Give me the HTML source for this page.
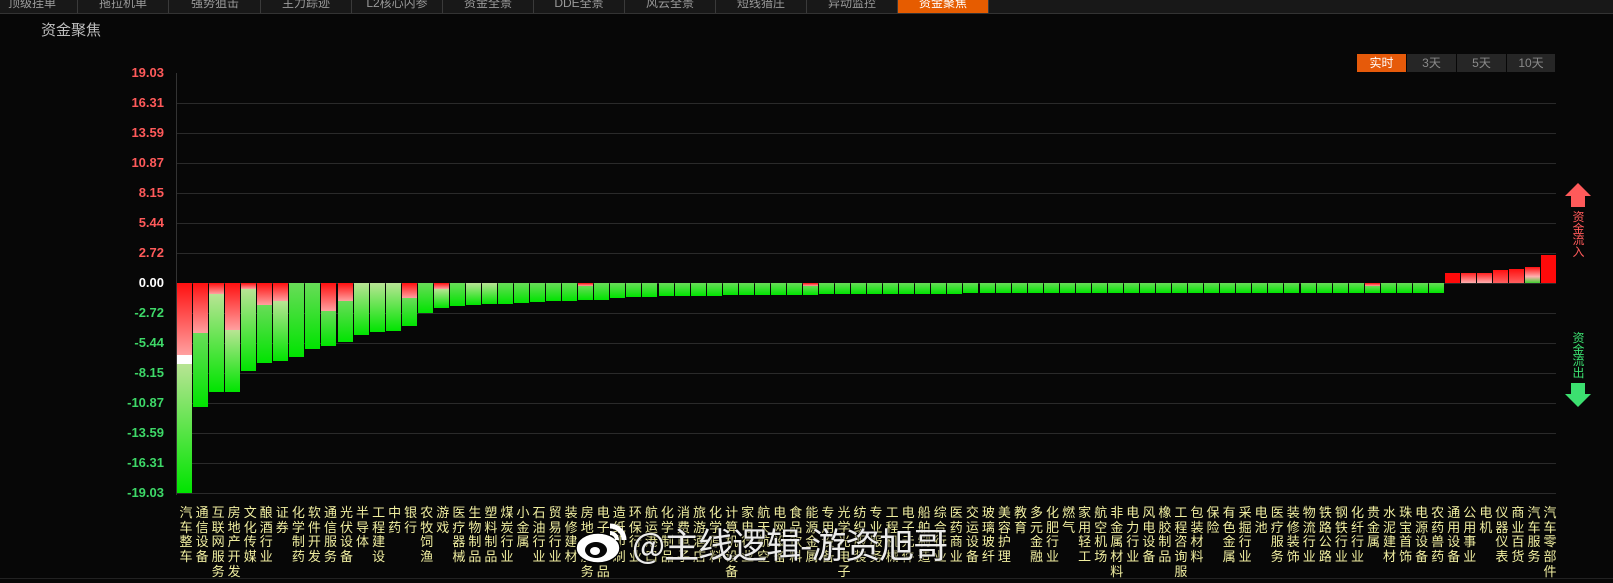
<!DOCTYPE html>
<html><head><meta charset="utf-8">
<style>
*{margin:0;padding:0;box-sizing:border-box}
body{width:1613px;height:583px;background:#070707;overflow:hidden;position:relative;font-family:"Liberation Sans","Noto Sans CJK SC",sans-serif}
.tabs{position:absolute;left:0;top:0;width:1613px;height:14px;background:#181818;border-bottom:1px solid #333}
.tab{position:absolute;top:0;height:13px;width:91px;border-right:1px solid #3a3a3a;color:#9a9a9a;font-size:12px;line-height:6px;text-align:center;overflow:hidden}
.tab.on{background:#e65c00;color:#fff}
.title{position:absolute;left:41px;top:19px;color:#bdbdbd;font-size:15px}
.btn{position:absolute;top:54px;height:18px;width:49px;background:#262626;color:#8a8a8a;font-size:12px;line-height:18px;text-align:center}
.btn.on{background:#e65a0a;color:#fff}
.grid{position:absolute;left:176px;width:1380px;height:1px;background:#2a2a2a}
.yl{position:absolute;right:1449px;font-size:13px;font-weight:bold;line-height:14px}
.axis{position:absolute;left:176px;top:73px;width:1px;height:422px;background:#333}
.bar{position:absolute;width:15px}
.labels{position:absolute;left:177px;top:506px;white-space:nowrap;font-size:13px;line-height:14.7px;color:#f0eea0}
.lb{display:inline-block;vertical-align:top;width:16.05px;white-space:normal;word-break:break-all;text-align:center;padding-left:2px}
.wm{position:absolute;left:632px;top:524px;font-size:35px;color:rgba(255,255,255,.92);font-family:"Noto Sans CJK SC",sans-serif;line-height:40px;text-shadow:0 0 2px #000,0 0 2px #000;letter-spacing:-1px}
.vt{position:absolute;left:1572px;width:13px;font-size:12px;line-height:11.5px;text-align:center}
</style></head><body>
<div class="tabs">
<div class="tab" style="left:-13px">顶级挂单</div>
<div class="tab" style="left:78px">拖拉机单</div>
<div class="tab" style="left:170px">强势狙击</div>
<div class="tab" style="left:261px">主力踪迹</div>
<div class="tab" style="left:352px">L2核心内参</div>
<div class="tab" style="left:443px">资金全景</div>
<div class="tab" style="left:534px">DDE全景</div>
<div class="tab" style="left:625px">风云全景</div>
<div class="tab" style="left:716px">短线猎庄</div>
<div class="tab" style="left:807px">异动监控</div>
<div class="tab on" style="left:898px">资金聚焦</div>
</div>
<div class="title">资金聚焦</div>
<div class="btn on" style="left:1357px">实时</div>
<div class="btn" style="left:1407px">3天</div>
<div class="btn" style="left:1457px">5天</div>
<div class="btn" style="left:1507px;width:48px">10天</div>

<div class="grid" style="top:103px"></div><div class="grid" style="top:133px"></div><div class="grid" style="top:163px"></div><div class="grid" style="top:193px"></div><div class="grid" style="top:223px"></div><div class="grid" style="top:253px"></div><div class="grid" style="top:283px"></div><div class="grid" style="top:313px"></div><div class="grid" style="top:343px"></div><div class="grid" style="top:373px"></div><div class="grid" style="top:403px"></div><div class="grid" style="top:433px"></div><div class="grid" style="top:463px"></div><div class="grid" style="top:493px"></div>
<div class="grid" style="top:578px;left:0;width:1613px;background:#222"></div>
<div class="axis"></div>

<div class="yl" style="top:66px;color:#ff5a5a">19.03</div>
<div class="yl" style="top:96px;color:#ff5a5a">16.31</div>
<div class="yl" style="top:126px;color:#ff5a5a">13.59</div>
<div class="yl" style="top:156px;color:#ff5a5a">10.87</div>
<div class="yl" style="top:186px;color:#ff5a5a">8.15</div>
<div class="yl" style="top:216px;color:#ff5a5a">5.44</div>
<div class="yl" style="top:246px;color:#ff5a5a">2.72</div>
<div class="yl" style="top:276px;color:#fff">0.00</div>
<div class="yl" style="top:306px;color:#3ed868">-2.72</div>
<div class="yl" style="top:336px;color:#3ed868">-5.44</div>
<div class="yl" style="top:366px;color:#3ed868">-8.15</div>
<div class="yl" style="top:396px;color:#3ed868">-10.87</div>
<div class="yl" style="top:426px;color:#3ed868">-13.59</div>
<div class="yl" style="top:456px;color:#3ed868">-16.31</div>
<div class="yl" style="top:486px;color:#3ed868">-19.03</div>

<div id="bars"></div>

<svg style="position:absolute;left:1565px;top:183px" width="27" height="25"><polygon points="13,0 26,13 20,13 20,24 6,24 6,13 0,13" fill="#ff5a5a"/></svg>
<div class="vt" style="top:212px;color:#ff5a5a">资金流入</div>
<div class="vt" style="top:333px;color:#3ce070">资金流出</div>
<svg style="position:absolute;left:1565px;top:383px" width="27" height="25"><polygon points="6,0 20,0 20,11 26,11 13,24 0,11 6,11" fill="#3ce070"/></svg>

<div class="labels"><span class="lb">汽车整车</span><span class="lb">通信设备</span><span class="lb">互联网服务</span><span class="lb">房地产开发</span><span class="lb">文化传媒</span><span class="lb">酿酒行业</span><span class="lb">证券</span><span class="lb">化学制药</span><span class="lb">软件开发</span><span class="lb">通信服务</span><span class="lb">光伏设备</span><span class="lb">半导体</span><span class="lb">工程建设</span><span class="lb">中药</span><span class="lb">银行</span><span class="lb">农牧饲渔</span><span class="lb">游戏</span><span class="lb">医疗器械</span><span class="lb">生物制品</span><span class="lb">塑料制品</span><span class="lb">煤炭行业</span><span class="lb">小金属</span><span class="lb">石油行业</span><span class="lb">贸易行业</span><span class="lb">装修建材</span><span class="lb">房地产服务</span><span class="lb">电子化学品</span><span class="lb">造纸印刷</span><span class="lb">环保行业</span><span class="lb">航运港口</span><span class="lb">化学制品</span><span class="lb">消费电子</span><span class="lb">旅游酒店</span><span class="lb">化学原料</span><span class="lb">计算机设备</span><span class="lb">家电行业</span><span class="lb">航天航空</span><span class="lb">电网设备</span><span class="lb">食品饮料</span><span class="lb">能源金属</span><span class="lb">专用设备</span><span class="lb">光学光电子</span><span class="lb">纺织服装</span><span class="lb">专业服务</span><span class="lb">工程机械</span><span class="lb">电子元件</span><span class="lb">船舶制造</span><span class="lb">综合行业</span><span class="lb">医药商业</span><span class="lb">交运设备</span><span class="lb">玻璃玻纤</span><span class="lb">美容护理</span><span class="lb">教育</span><span class="lb">多元金融</span><span class="lb">化肥行业</span><span class="lb">燃气</span><span class="lb">家用轻工</span><span class="lb">航空机场</span><span class="lb">非金属材料</span><span class="lb">电力行业</span><span class="lb">风电设备</span><span class="lb">橡胶制品</span><span class="lb">工程咨询服</span><span class="lb">包装材料</span><span class="lb">保险</span><span class="lb">有色金属</span><span class="lb">采掘行业</span><span class="lb">电池</span><span class="lb">医疗服务</span><span class="lb">装修装饰</span><span class="lb">物流行业</span><span class="lb">铁路公路</span><span class="lb">钢铁行业</span><span class="lb">化纤行业</span><span class="lb">贵金属</span><span class="lb">水泥建材</span><span class="lb">珠宝首饰</span><span class="lb">电源设备</span><span class="lb">农药兽药</span><span class="lb">通用设备</span><span class="lb">公用事业</span><span class="lb">电机</span><span class="lb">仪器仪表</span><span class="lb">商业百货</span><span class="lb">汽车服务</span><span class="lb">汽车零部件</span></div>

<svg style="position:absolute;left:574px;top:520px" width="56" height="46"><ellipse cx="24" cy="28" rx="22" ry="15" fill="#fff" stroke="#000" stroke-width="1.5"/><ellipse cx="22" cy="30" rx="11" ry="8" fill="#070707"/><ellipse cx="21" cy="31" rx="5" ry="4" fill="#fff"/><path d="M36 6 A14 14 0 0 1 50 20" stroke="#fff" stroke-width="5" fill="none"/><path d="M36 13 A7 7 0 0 1 43 20" stroke="#fff" stroke-width="4" fill="none"/></svg>
<div class="wm">@主线逻辑-游资旭哥</div>

<script>
(function(){
var neg=[210,124,109,109,88,80,78,74,66,63,59,52,49,48,43,30,25,23,22,21,21,20,19,18,18,17,17,15,14,14,13,13,13,13,12,12,12,12,12,12,11,11,11,11,11,11,11,11,11,10,10,10,10,10,10,10,10,10,10,10,10,10,10,10,10,10,10,10,10,10,10,10,10,10,10,10,10,10,10];
var red={0:72,1:50,2:11,3:47,4:6,5:22,6:18,9:28,10:18,14:15,16:6,25:3,39:3,74:3};
var pale={0:1,2:1,3:1,4:1,6:1,11:1,12:1,13:1,16:1,18:1,19:1};
var pos=[10,10,10,13,14,16,28];
var h='',Z=283;
for(var i=0;i<86;i++){
 var x=Math.round(177+i*16.05);
 if(i<79){
  var v=neg[i],r=red[i]||0,t=Z;
  if(r){h+='<div class="bar" style="left:'+x+'px;top:'+t+'px;height:'+r+'px;background:linear-gradient(#ff1010,#ffa0a0)"></div>';t+=r;}
  if(i==0){h+='<div class="bar" style="left:'+x+'px;top:'+t+'px;height:9px;background:#fff"></div>';t+=9;}
  var tc=pale[i]?'#b8e494':'#68dc58';
  h+='<div class="bar" style="left:'+x+'px;top:'+t+'px;height:'+(Z+v-t)+'px;background:linear-gradient('+tc+',#00e400)"></div>';
 }else{
  var p=pos[i-79],bg='#ff0a0a';
  if(i==80||i==81)bg='linear-gradient(#ff2020,#ffb0b0)';
  if(i==82||i==83)bg='linear-gradient(#ff1010,#ff6060)';
  if(i==84)bg='linear-gradient(#ff1010,#ffb0b0 60%,#40d030)';
  h+='<div class="bar" style="left:'+x+'px;top:'+(Z-p)+'px;height:'+p+'px;background:'+bg+'"></div>';
 }
}
document.getElementById('bars').innerHTML=h;
})();
</script>
</body></html>
